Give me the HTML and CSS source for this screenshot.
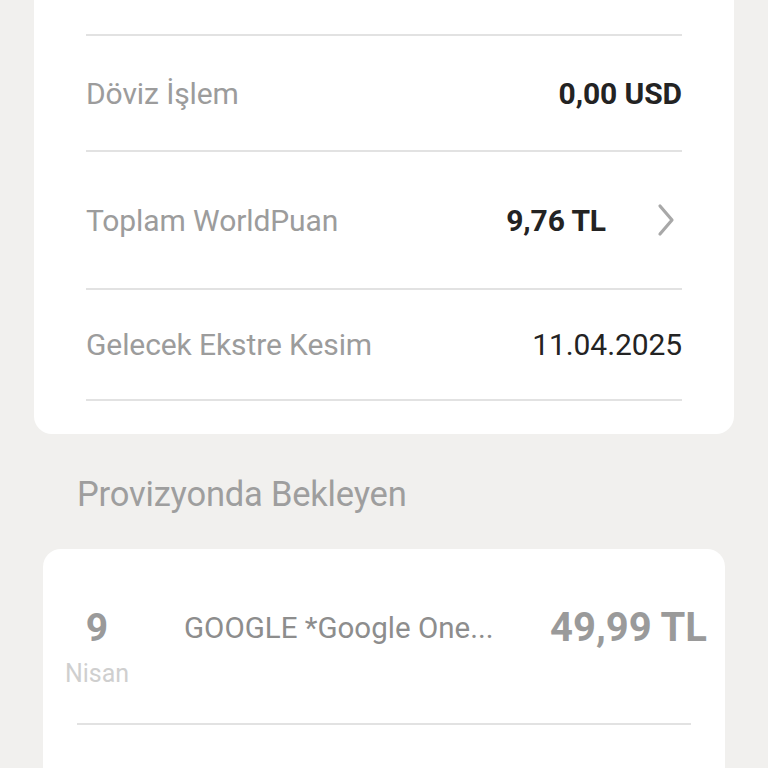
FILE: index.html
```html
<!DOCTYPE html>
<html lang="tr">
<head>
<meta charset="utf-8">
<title>Kart Detayı</title>
<link rel="stylesheet" href="styles.css">
</head>
<body>
<div class="page">
  <section class="card summary">
    <div class="divider"></div>
    <div class="row r1">
      <span class="label">Döviz İşlem</span>
      <span class="value bold">0,00 USD</span>
    </div>
    <div class="divider"></div>
    <div class="row r2">
      <span class="label">Toplam WorldPuan</span>
      <span class="value-link">
        <span class="value bold">9,76 TL</span>
        <svg class="chev" width="20" height="34" viewBox="0 0 20 34"><path d="M4 3 L16 17 L4 31" fill="none" stroke="#a8a8a8" stroke-width="3.2" stroke-linecap="round" stroke-linejoin="round"/></svg>
      </span>
    </div>
    <div class="divider"></div>
    <div class="row r3">
      <span class="label">Gelecek Ekstre Kesim</span>
      <span class="value">11.04.2025</span>
    </div>
    <div class="divider"></div>
  </section>

  <h2 class="section-title">Provizyonda Bekleyen</h2>

  <section class="card pending">
    <div class="tx">
      <div class="date">
        <span class="day">9</span>
        <span class="month">Nisan</span>
      </div>
      <div class="merchant">GOOGLE *Google One...</div>
      <div class="amount">49,99 TL</div>
    </div>
    <div class="divider tx-divider"></div>
  </section>
</div>
</body>
</html>
```

FILE: styles.css
```css
html, body {
  margin: 0;
  padding: 0;
  background: #f1f0ee;
}
body {
  font-family: Roboto, "Noto Sans", "Liberation Sans", sans-serif;
  width: 768px;
  height: 768px;
  overflow: hidden;
}
.page {
  display: flex;
  flex-direction: column;
}
.card {
  background: #ffffff;
}
.summary {
  margin: 0 34px;
  padding: 34px 52px 33px;
  border-radius: 0 0 18px 18px;
}
.divider {
  height: 2px;
  background: #e2e2e2;
}
.row {
  display: flex;
  align-items: center;
  justify-content: space-between;
}
.r1 { height: 114px; }
.r2 { height: 136px; }
.r3 { height: 109px; }
.label {
  font-size: 30px;
  color: #9c9c9c;
  letter-spacing: -0.1px;
}
.value {
  font-size: 30px;
  color: #232323;
  letter-spacing: -0.1px;
}
.value.bold {
  font-weight: 700;
}
.value-link {
  display: flex;
  align-items: center;
  gap: 50px;
  padding-right: 6px;
}
.chev {
  display: block;
}
.section-title {
  margin: 40px 0 0 77px;
  font-size: 34.5px;
  line-height: 40px;
  font-weight: 400;
  color: #9e9e9e;
  letter-spacing: -0.2px;
}
.pending {
  margin: 35px 43px 0;
  border-radius: 18px 18px 0 0;
  height: 260px;
  padding: 0 34px;
}
.tx {
  display: flex;
  align-items: flex-start;
  margin: 0 -18px 0 -12px;
  padding-top: 56px;
  height: 118px;
}
.date {
  width: 64px;
  display: flex;
  flex-direction: column;
  align-items: center;
}
.day {
  font-size: 39px;
  line-height: 46px;
  font-weight: 700;
  color: #9a9a9a;
}
.month {
  font-size: 25px;
  line-height: 30px;
  margin-top: 8px;
  color: #cfcfcf;
}
.merchant {
  margin-left: 55px;
  margin-top: 6px;
  font-size: 29.5px;
  line-height: 34px;
  color: #8d8d8d;
  flex: 1;
}
.amount {
  font-size: 40px;
  line-height: 46px;
  font-weight: 700;
  color: #9a9a9a;
  margin-right: 2px;
}
```
